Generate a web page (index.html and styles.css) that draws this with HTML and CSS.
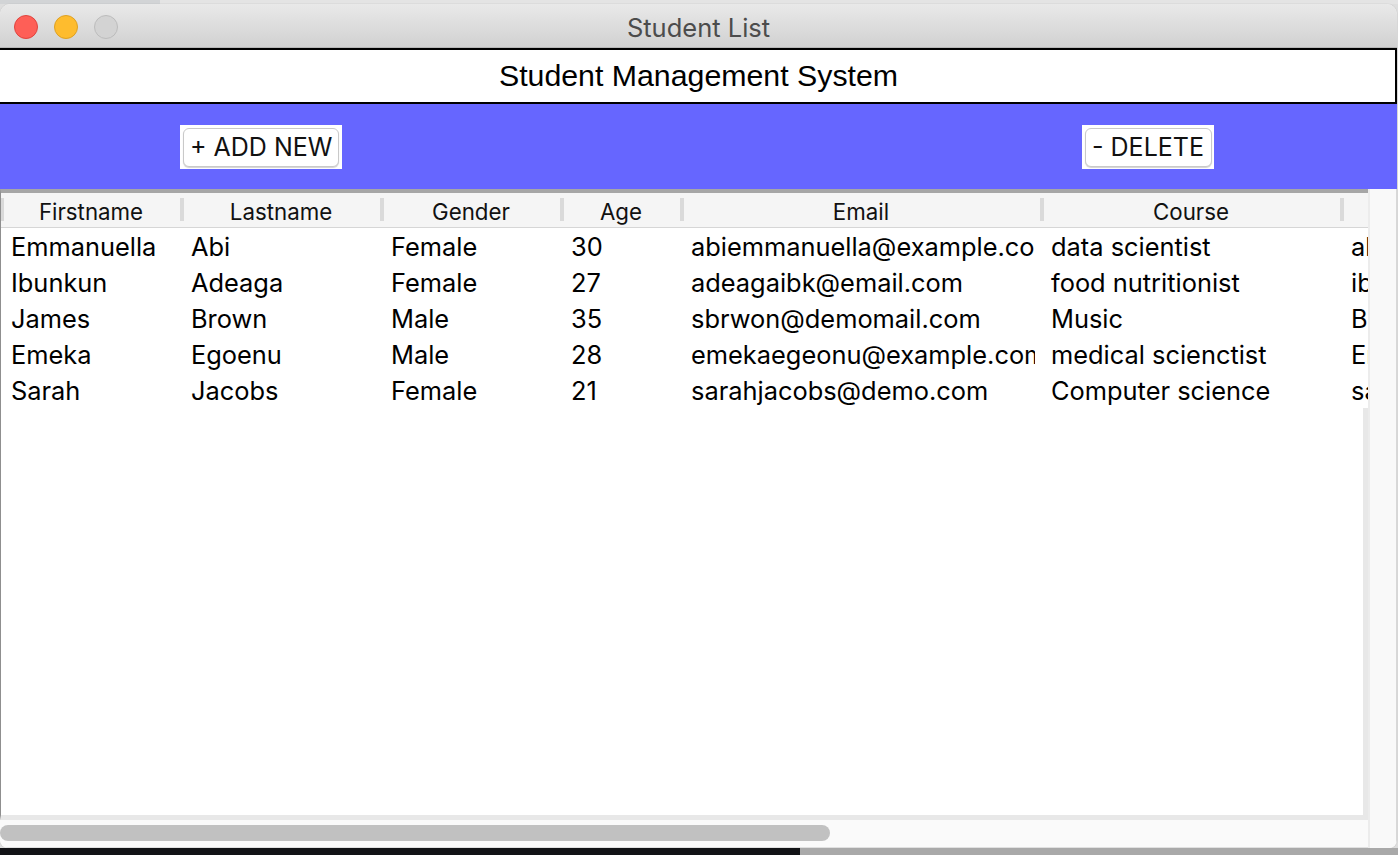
FILE: index.html
```html
<!DOCTYPE html>
<html>
<head>
<meta charset="utf-8">
<title>Student List</title>
<link rel="stylesheet" href="styles.css">
</head>
<body>
<div class="desk-top"><div class="behind"></div></div>
<div class="window">
  <div class="titlebar">
    <div class="lights">
      <span class="light red"></span>
      <span class="light yellow"></span>
      <span class="light gray"></span>
    </div>
    <div class="title">Student List</div>
  </div>
  <div class="banner">Student Management System</div>
  <div class="toolbar">
    <div class="btn-wrap add"><button class="btn">+ ADD NEW</button></div>
    <div class="btn-wrap del"><button class="btn">- DELETE</button></div>
  </div>
  <div class="content">
    <div class="main">
      <div class="viewport">
        <div class="thead">
          <div class="th c1">Firstname</div>
          <div class="th c2">Lastname</div>
          <div class="th c3">Gender</div>
          <div class="th c4">Age</div>
          <div class="th c5">Email</div>
          <div class="th c6">Course</div>
          <div class="th c7"></div>
        </div>
        <div class="tbody">
          <div class="rows">
            <div class="tr"><div class="td c1">Emmanuella</div><div class="td c2">Abi</div><div class="td c3">Female</div><div class="td c4">30</div><div class="td c5">abiemmanuella@example.com</div><div class="td c6">data scientist</div><div class="td c7">abi</div></div>
            <div class="tr"><div class="td c1">Ibunkun</div><div class="td c2">Adeaga</div><div class="td c3">Female</div><div class="td c4">27</div><div class="td c5">adeagaibk@email.com</div><div class="td c6">food nutritionist</div><div class="td c7">ibk</div></div>
            <div class="tr"><div class="td c1">James</div><div class="td c2">Brown</div><div class="td c3">Male</div><div class="td c4">35</div><div class="td c5">sbrwon@demomail.com</div><div class="td c6">Music</div><div class="td c7">Brown</div></div>
            <div class="tr"><div class="td c1">Emeka</div><div class="td c2">Egoenu</div><div class="td c3">Male</div><div class="td c4">28</div><div class="td c5">emekaegeonu@example.com</div><div class="td c6">medical scienctist</div><div class="td c7">Emeka</div></div>
            <div class="tr"><div class="td c1">Sarah</div><div class="td c2">Jacobs</div><div class="td c3">Female</div><div class="td c4">21</div><div class="td c5">sarahjacobs@demo.com</div><div class="td c6">Computer science</div><div class="td c7">sarah</div></div>
          </div>
          <div class="filler"></div>
        </div>
      </div>
      <div class="hscroll"><div class="thumb"></div></div>
    </div>
    <div class="vscroll"></div>
  </div>
</div>
<div class="desk-bottom"><div class="dark"></div></div>
</body>
</html>
```

FILE: styles.css
```css
* { box-sizing: border-box; }
html, body { margin: 0; padding: 0; }
body {
  width: 1398px;
  height: 855px;
  overflow: hidden;
  background: #dedede;
  font-family: Inter, "Noto Sans", sans-serif;
}
.desk-top {
  height: 4px;
  background: #e4e4e4;
}
.behind {
  width: 160px;
  height: 4px;
  background: #d2d4d6;
}
.window {
  width: 1397px;
  height: 844px;
  background: #ffffff;
  border-radius: 10px 10px 8px 8px;
  overflow: hidden;
  display: flex;
  flex-direction: column;
  box-shadow: 0 0 1px #9a9a9a;
}
.titlebar {
  height: 44px;
  flex: none;
  background: linear-gradient(#e9e9e9, #d1d1d1);
  border-bottom: 1px solid #b7b7b7;
  display: flex;
  align-items: center;
  position: relative;
}
.lights {
  display: flex;
  gap: 16px;
  padding-left: 14px;
  padding-top: 2px;
}
.light {
  width: 24px;
  height: 24px;
  border-radius: 50%;
  display: block;
}
.red { background: #fe5f57; border: 1px solid #e0443e; }
.yellow { background: #febc2e; border: 1px solid #dea123; }
.gray { background: #d3d3d3; border: 1px solid #bcbcbc; }
.title {
  position: absolute;
  left: 0;
  right: 0;
  top: 0;
  bottom: 0;
  display: flex;
  align-items: center;
  justify-content: center;
  font-size: 25.5px;
  color: #4c4c4c;
  padding-top: 4px;
}
.banner {
  height: 56px;
  flex: none;
  border: 2px solid #000;
  border-left: none;
  display: flex;
  align-items: center;
  justify-content: center;
  font-family: "Liberation Sans", Arial, sans-serif;
  font-size: 30.3px;
  color: #000;
  padding-left: 2px;
}
.toolbar {
  height: 85px;
  flex: none;
  background: #6666ff;
  display: flex;
  align-items: flex-start;
  padding-top: 21px;
  padding-left: 180px;
}
.btn-wrap {
  background: #fff;
  height: 44px;
  display: flex;
  align-items: center;
  justify-content: center;
}
.btn-wrap.add { width: 162px; }
.btn-wrap.del { width: 132px; margin-left: 740px; }
.btn {
  font-family: Inter, "Noto Sans", sans-serif;
  font-size: 25px;
  color: #111;
  background: #fff;
  border: 1px solid #c9c9c9;
  border-radius: 6px;
  box-shadow: 0 1px 1px rgba(0,0,0,0.18);
  height: 39px;
  padding: 0 6px;
  margin: 0;
  white-space: nowrap;
}
.add .btn { width: 156px; }
.del .btn { width: 127px; }
.content {
  flex: 1;
  display: flex;
  min-height: 0;
}
.main {
  width: 1368px;
  display: flex;
  flex-direction: column;
}
.viewport {
  flex: 1;
  border-left: 1px solid #8f8f8f;
  border-top: 4px solid #a6a6a6;
  overflow: hidden;
  display: flex;
  flex-direction: column;
  border-bottom: 5px solid #e8e8e8;
}
.thead {
  height: 35px;
  flex: none;
  background: #f5f5f5;
  border-bottom: 1px solid #d6d6d6;
  display: flex;
  position: relative;
}
.thead::before {
  content: "";
  position: absolute;
  left: 0;
  top: 5px;
  width: 3px;
  height: 23px;
  background: #d9d9d9;
}
.th {
  flex: none;
  position: relative;
  display: flex;
  align-items: center;
  justify-content: center;
  font-size: 22.3px;
  color: #111;
  padding-top: 2px;
}
.th::after {
  content: "";
  position: absolute;
  right: -3px;
  top: 5px;
  width: 4px;
  height: 23px;
  background: #dadada;
  z-index: 1;
}
.th.c7::after { display: none; }
.c1 { width: 180px; }
.c2 { width: 200px; }
.c3 { width: 180px; }
.c4 { width: 120px; }
.c5 { width: 360px; }
.c6 { width: 300px; }
.c7 { width: 200px; }
.tbody {
  flex: 1;
  display: flex;
  flex-direction: column;
}
.rows { flex: none; }
.filler {
  flex: 1;
  border-right: 5px solid #e8e8e8;
}
.tr {
  height: 36px;
  display: flex;
}
.td {
  flex: none;
  overflow: hidden;
  white-space: nowrap;
  padding-left: 10px;
  font-size: 25.4px;
  line-height: 36px;
  padding-top: 1px;
  color: #000;
  clip-path: inset(0 6px 0 0);
}
.td.c7 { clip-path: none; }
.hscroll {
  height: 28px;
  flex: none;
  background: #fafafa;
  border-bottom: 1px solid #e0e0e0;
  padding-top: 5px;
}
.thumb {
  width: 830px;
  height: 16px;
  background: #c1c1c1;
  border-radius: 8px;
}
.vscroll {
  flex: 1;
  background: #f9f9f9;
  border-left: 2px solid #ececec;
  border-right: 1px solid #d8d8d8;
}
.desk-bottom {
  height: 7px;
  background: #a9a9a9;
}
.dark {
  width: 800px;
  height: 7px;
  background: #121316;
}
```
